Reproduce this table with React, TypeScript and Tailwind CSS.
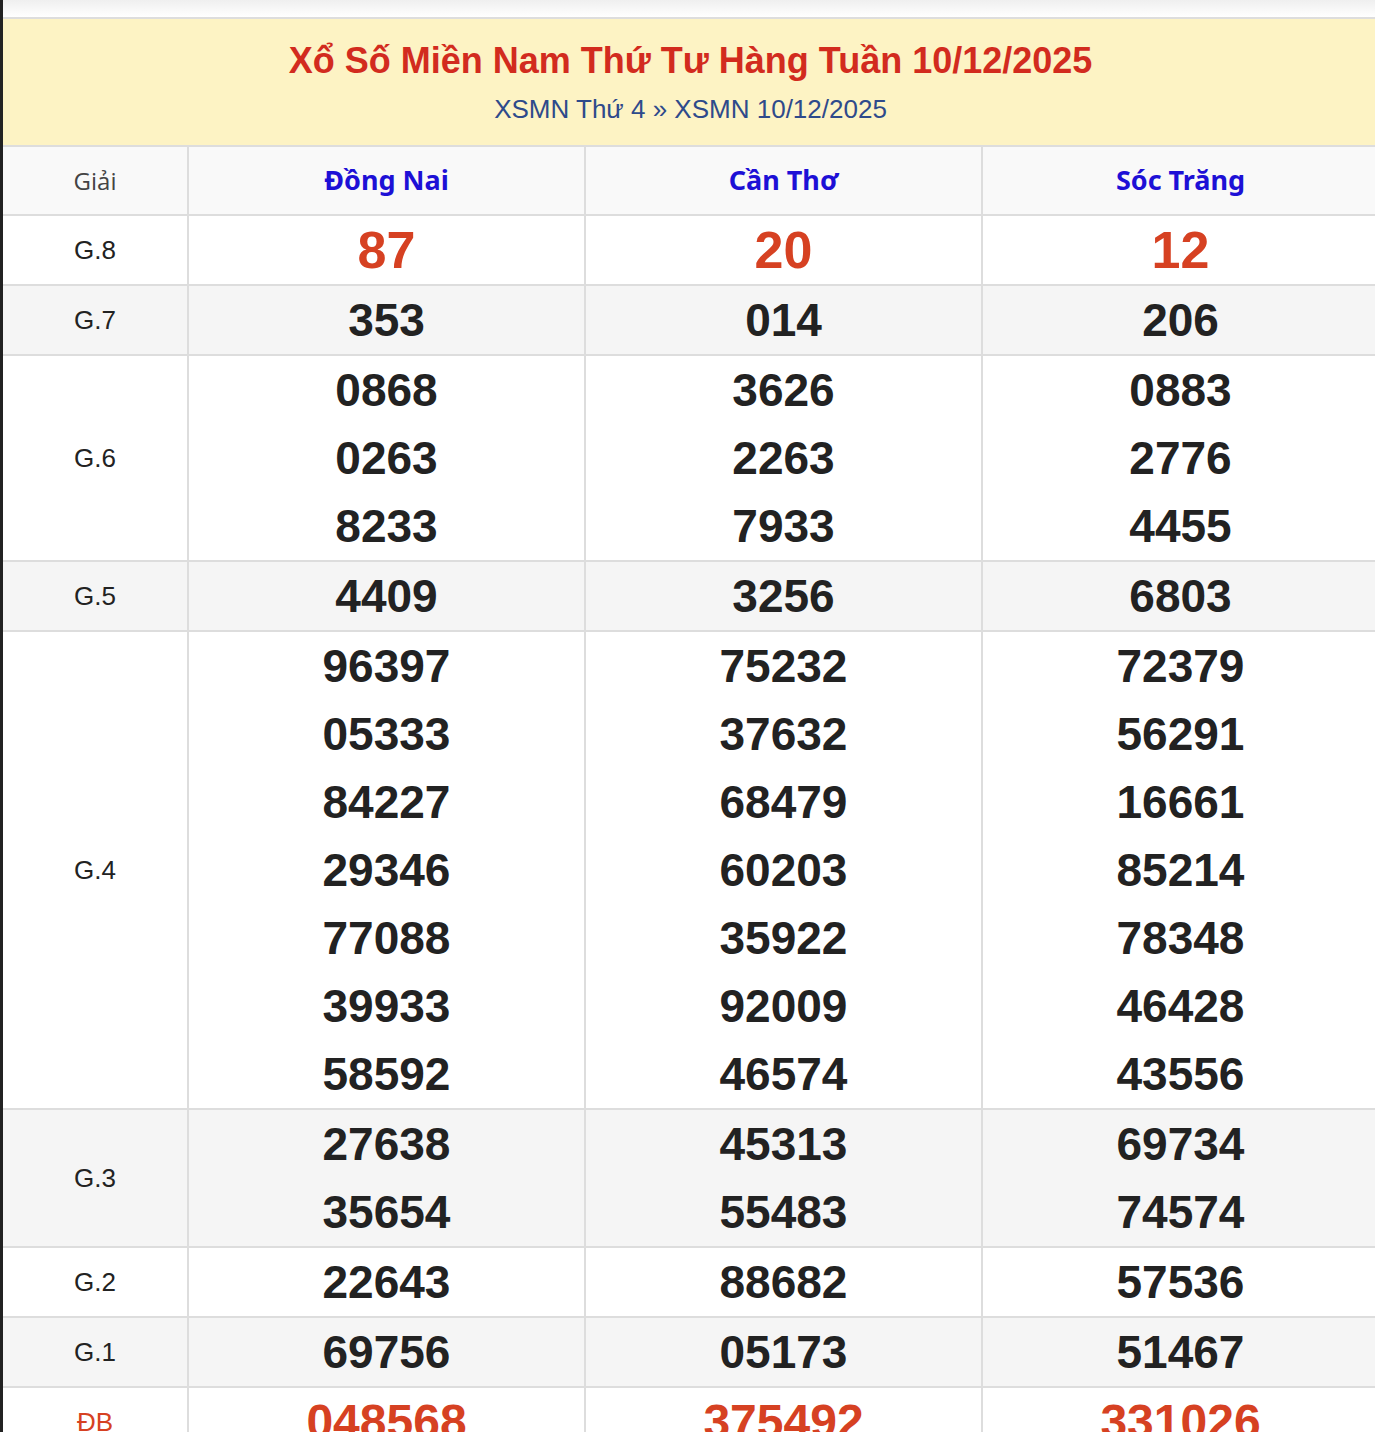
import React from "react";

type Row = { label: string; values: string[][]; kind?: "g8" | "db"; shade?: boolean };

const provinces = ["Đồng Nai", "Cần Thơ", "Sóc Trăng"];

const rows: Row[] = [
  { label: "G.8", kind: "g8", values: [["87"], ["20"], ["12"]] },
  { label: "G.7", shade: true, values: [["353"], ["014"], ["206"]] },
  {
    label: "G.6",
    values: [
      ["0868", "0263", "8233"],
      ["3626", "2263", "7933"],
      ["0883", "2776", "4455"],
    ],
  },
  { label: "G.5", shade: true, values: [["4409"], ["3256"], ["6803"]] },
  {
    label: "G.4",
    values: [
      ["96397", "05333", "84227", "29346", "77088", "39933", "58592"],
      ["75232", "37632", "68479", "60203", "35922", "92009", "46574"],
      ["72379", "56291", "16661", "85214", "78348", "46428", "43556"],
    ],
  },
  {
    label: "G.3",
    shade: true,
    values: [
      ["27638", "35654"],
      ["45313", "55483"],
      ["69734", "74574"],
    ],
  },
  { label: "G.2", values: [["22643"], ["88682"], ["57536"]] },
  { label: "G.1", shade: true, values: [["69756"], ["05173"], ["51467"]] },
  { label: "ĐB", kind: "db", values: [["048568"], ["375492"], ["331026"]] },
];

function numClass(kind?: "g8" | "db") {
  if (kind === "g8") return "text-[52px] text-[#d64122]";
  if (kind === "db") return "text-[48px] text-[#d64122]";
  return "text-[46px] text-[#222]";
}

export default function App() {
  return (
    <div className="min-h-[1432px] overflow-hidden border-l-[3px] border-[#222] bg-white font-['Liberation_Sans',Arial,sans-serif]">
      <div className="h-[17px] bg-gradient-to-b from-[#efefef] to-white" />
      <div className="w-[1375px] border-t-2 border-[#dddddd]">
        <div className="flex h-[126px] flex-col items-center bg-[#fdf3c4] pt-[20px]">
          <h1 className="text-[36px] font-bold leading-[44px] text-[#d22b1e]">
            Xổ Số Miền Nam Thứ Tư Hàng Tuần 10/12/2025
          </h1>
          <p className="mt-[10px] text-[26px] leading-[32px] text-[#2e4a8b]">
            XSMN Thứ 4 » XSMN 10/12/2025
          </p>
        </div>

        <div className="flex h-[71px] border-y-2 border-[#dddddd] bg-[#f9f9f9]">
          <div className="flex w-[184px] shrink-0 items-center justify-center font-['Open_Sans',sans-serif] text-[24px] text-[#444]">
            Giải
          </div>
          {provinces.map((p) => (
            <div
              key={p}
              className="flex flex-1 items-center justify-center border-l-2 border-[#dddddd] font-['Noto_Sans',sans-serif] text-[27px] font-bold text-[#1d10d6]"
            >
              {p}
            </div>
          ))}
        </div>

        {rows.map((r) => (
          <div
            key={r.label}
            className={`flex border-b-2 border-[#dddddd] ${r.shade ? "bg-[#f5f5f5]" : "bg-white"}`}
          >
            <div
              className={`flex w-[184px] shrink-0 items-center justify-center text-[26px] ${
                r.kind === "db" ? "text-[#d64122]" : "text-[#222]"
              }`}
            >
              {r.label}
            </div>
            {r.values.map((col, i) => (
              <div key={i} className="flex flex-1 flex-col border-l-2 border-[#dddddd]">
                {col.map((v, j) => (
                  <div
                    key={j}
                    className={`flex h-[68px] items-center justify-center font-bold leading-none ${numClass(r.kind)}`}
                  >
                    {v}
                  </div>
                ))}
              </div>
            ))}
          </div>
        ))}
      </div>
    </div>
  );
}
